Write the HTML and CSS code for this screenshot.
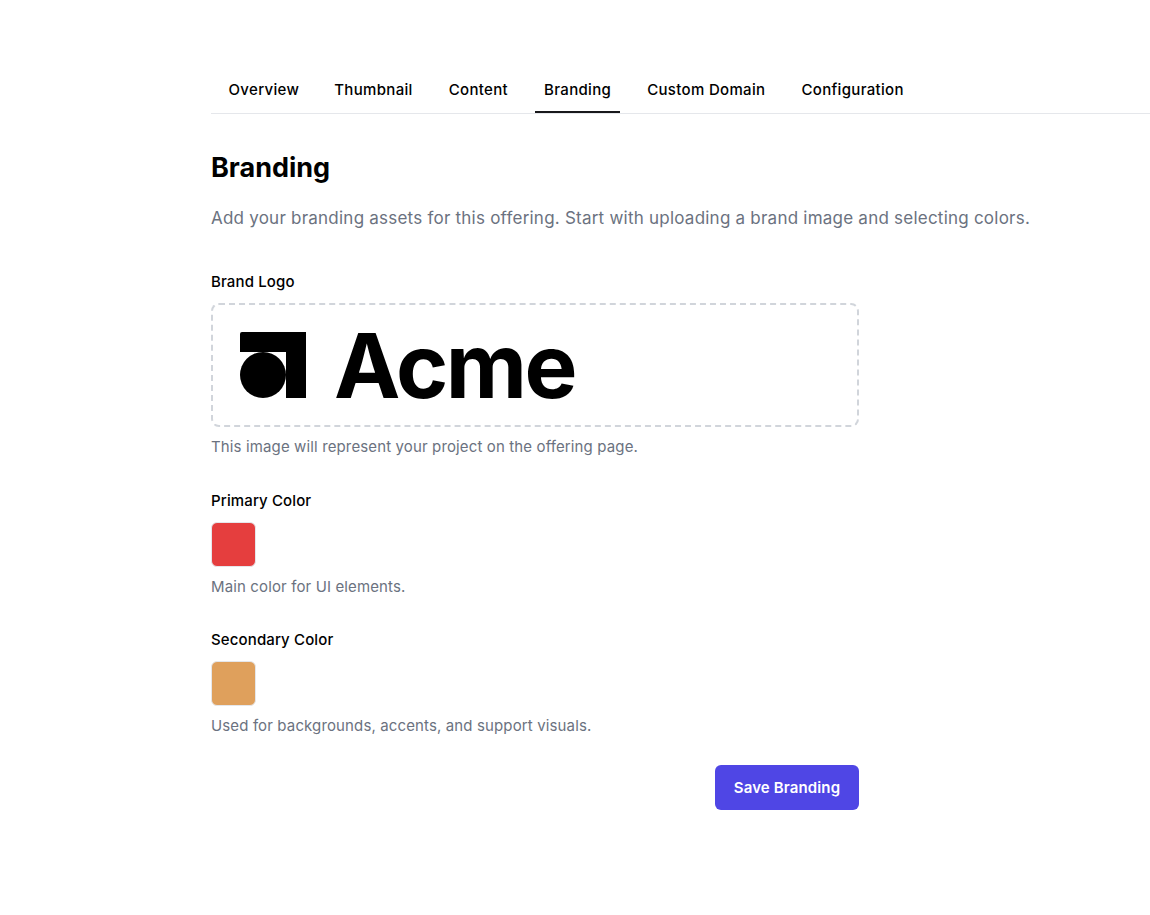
FILE: index.html
```html
<!DOCTYPE html>
<html lang="en">
<head>
<meta charset="utf-8">
<title>Branding</title>
<link rel="stylesheet" href="styles.css">
</head>
<body>
<main class="page">
  <nav class="tabs">
    <a class="tab">Overview</a>
    <a class="tab">Thumbnail</a>
    <a class="tab">Content</a>
    <a class="tab active">Branding</a>
    <a class="tab">Custom Domain</a>
    <a class="tab">Configuration</a>
  </nav>
  <section class="content">
    <h1 class="title">Branding</h1>
    <p class="lead">Add your branding assets for this offering. Start with uploading a brand image and selecting colors.</p>
    <div class="field">
      <label class="label">Brand Logo</label>
      <div class="dropzone">
        <svg class="mark" width="66" height="66" viewBox="0 0 66 66" aria-hidden="true">
          <path d="M2 0H66V66H46V20H0V2A2 2 0 0 1 2 0Z" fill="#000"/>
          <circle cx="23" cy="43" r="23" fill="#000"/>
        </svg>
        <span class="wordmark">Acme</span>
      </div>
      <p class="hint">This image will represent your project on the offering page.</p>
    </div>
    <div class="field">
      <label class="label">Primary Color</label>
      <div class="swatch swatch-primary"></div>
      <p class="hint">Main color for UI elements.</p>
    </div>
    <div class="field">
      <label class="label">Secondary Color</label>
      <div class="swatch swatch-secondary"></div>
      <p class="hint">Used for backgrounds, accents, and support visuals.</p>
    </div>
    <div class="actions">
      <button class="save" type="button">Save Branding</button>
    </div>
  </section>
</main>
</body>
</html>
```
FILE: styles.css
```css
* { box-sizing: border-box; }
html, body { margin: 0; background: #fff; }
body {
  font-family: Inter, "Liberation Sans", sans-serif;
  color: #000;
  height: 915px;
  overflow: hidden;
}
.page { padding: 67px 0 0 211px; }
.tabs {
  display: flex;
  height: 47px;
  border-bottom: 1px solid #e5e7eb;
}
.tab {
  display: block;
  height: 46px;
  padding: 13px 9px 0;
  margin-right: 18px;
  font-size: 15px;
  line-height: 20px;
  font-weight: 450;
  letter-spacing: 0.33px;
  color: #000;
  white-space: nowrap;
}
.tab:first-child { margin-left: 8.5px; margin-right: 17px; }
.tab.active { border-bottom: 2px solid #18181b; }
.content { width: 648px; }
.title {
  margin: 0;
  padding-top: 38px;
  font-size: 27px;
  line-height: 32px;
  font-weight: 700;
}
.lead {
  margin: 22px 0 0;
  font-size: 17px;
  line-height: 24px;
  letter-spacing: 0.23px;
  color: #6b7280;
  white-space: nowrap;
}
.field { margin-top: 42px; }
.field + .field { margin-top: 33.5px; }
.label {
  display: block;
  font-size: 15px;
  line-height: 20px;
  font-weight: 500;
  letter-spacing: 0.13px;
}
.dropzone {
  display: flex;
  align-items: center;
  gap: 28px;
  height: 124px;
  margin-top: 11px;
  padding-left: 27px;
  border: 2px dashed #d1d5db;
  border-radius: 8px;
}
.mark { flex: none; }
.wordmark {
  font-size: 89px;
  line-height: 1;
  font-weight: 700;
  letter-spacing: -2.5px;
}
.hint {
  margin: 10px 0 0;
  font-size: 15px;
  line-height: 20px;
  letter-spacing: 0.13px;
  color: #6b7280;
}
.swatch {
  width: 45px;
  height: 45px;
  margin-top: 11px;
  border: 1px solid #e5e7eb;
  border-radius: 6px;
}
.swatch-primary { background: #e53e3e; }
.swatch-secondary { background: #dfa05c; }
.actions {
  display: flex;
  justify-content: flex-end;
  margin-top: 29px;
}
.save {
  width: 144px;
  height: 45px;
  border: 0;
  border-radius: 6px;
  background: #4f46e5;
  color: #fff;
  font: 600 15px/20px Inter, "Liberation Sans", sans-serif;
  letter-spacing: 0.13px;
}
```
